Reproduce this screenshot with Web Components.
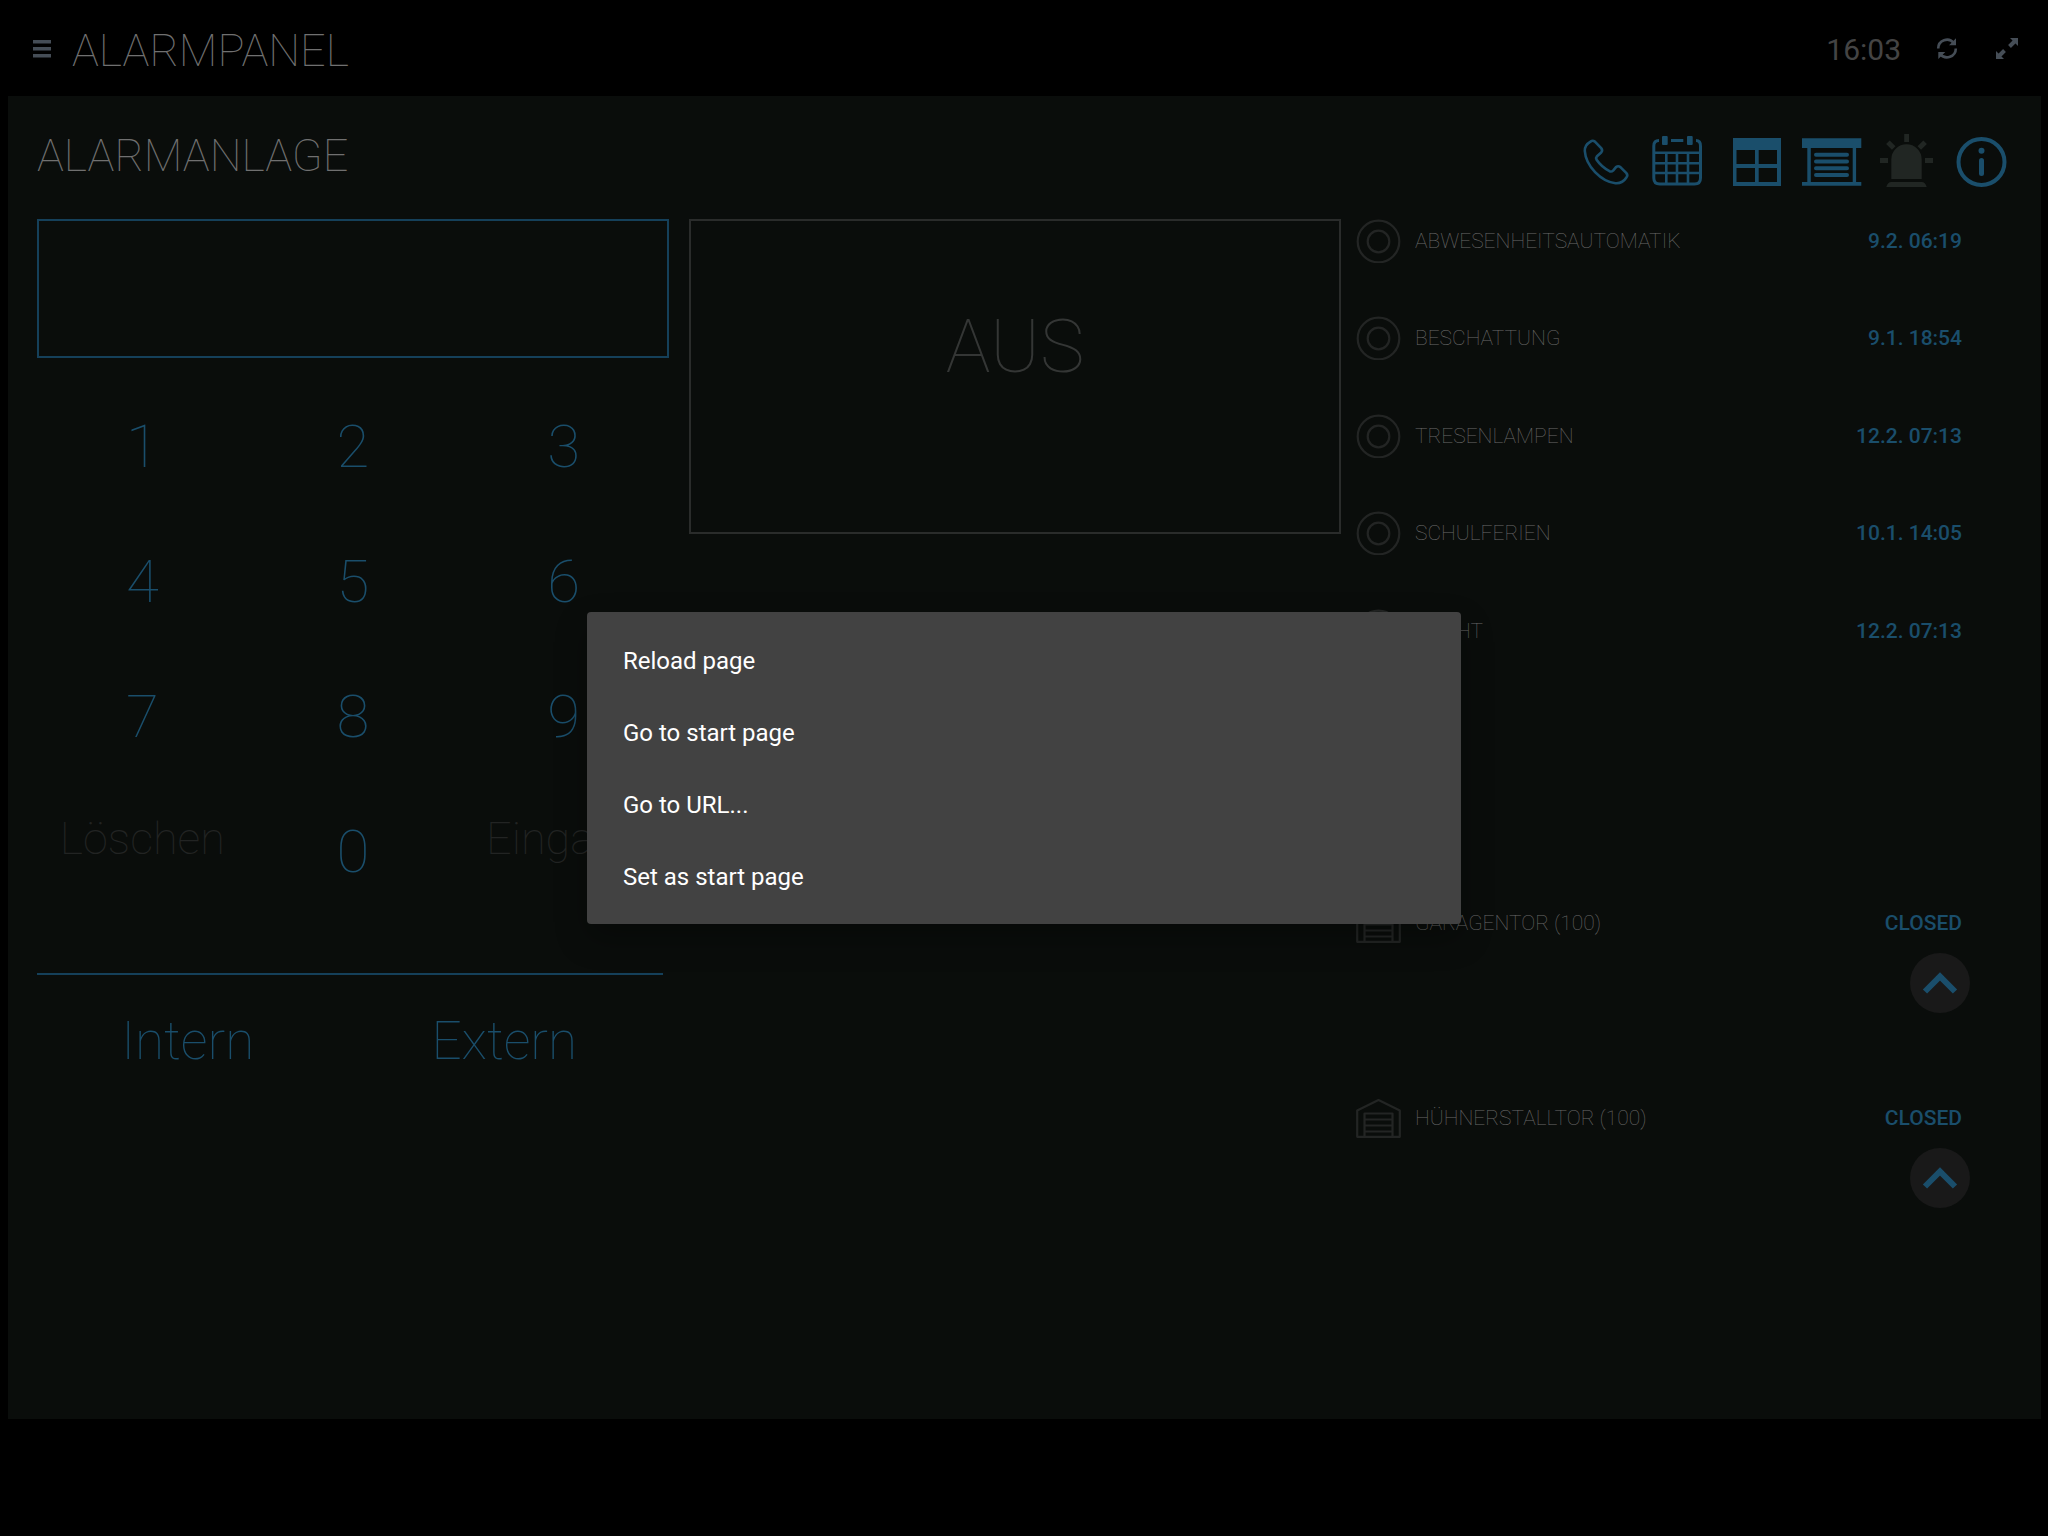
<!DOCTYPE html>
<html lang="de">
<head>
<meta charset="utf-8">
<title>Alarmpanel</title>
<style>
  html { background: #000; }
  body { margin: 0; background: #000; font-family: Roboto, "Liberation Sans", sans-serif; }
</style>
</head>
<body>
<alarm-app>
  <top-bar slot="header" heading="ALARMPANEL" time="16:03"></top-bar>
  <alarm-panel heading="ALARMANLAGE">
    <key-pad slot="keys"></key-pad>
    <alarm-state slot="state">AUS</alarm-state>
    <status-list slot="list">
      <status-row value="9.2. 06:19">ABWESENHEITSAUTOMATIK</status-row>
      <status-row value="9.1. 18:54">BESCHATTUNG</status-row>
      <status-row value="12.2. 07:13">TRESENLAMPEN</status-row>
      <status-row value="10.1. 14:05">SCHULFERIEN</status-row>
      <status-row value="12.2. 07:13">NACHT</status-row>
      <status-row gate class="garage" value="CLOSED">GARAGENTOR (100)</status-row>
      <status-row gate class="coop" value="CLOSED">HÜHNERSTALLTOR (100)</status-row>
    </status-list>
  </alarm-panel>
  <context-menu slot="overlay">
    <menu-item>Reload page</menu-item>
    <menu-item>Go to start page</menu-item>
    <menu-item>Go to URL...</menu-item>
    <menu-item>Set as start page</menu-item>
  </context-menu>
</alarm-app>

<script>
const RESET = `
  *, *::before, *::after { box-sizing: border-box; }
  button, input { font: inherit; color: inherit; margin: 0; padding: 0; border: 0; background: none; border-radius: 0; outline: 0; }
  button { cursor: pointer; }
  h1, h2 { margin: 0; font-weight: 100; }
  svg { display: block; }
`;
const define = (name, css, html) => customElements.define(name, class extends HTMLElement {
  constructor() {
    super();
    this.attachShadow({ mode: 'open' });
  }
  connectedCallback() {
    this.shadowRoot.innerHTML = `<style>${RESET}${css}</style>` + (typeof html === 'function' ? html(this) : html);
  }
});

define('alarm-app', `
  :host {
    --blue: #1a4e6b; --line: #15405a; --grey: #707070;
    box-sizing: border-box; display: flex; flex-direction: column; position: relative; min-height: 100vh; padding: 0 7px 117px 8px; background: #000;
  }
  ::slotted(top-bar) { margin: 0 -7px 0 -8px; }
  ::slotted(alarm-panel) { flex: 1; }
`, `<slot name="header"></slot><slot></slot><slot name="overlay"></slot>`);

define('top-bar', `
  :host { display: block; }
  header { display: flex; align-items: center; height: 96px; padding: 3px 30px 0 33px; color: #454d56; }
  h1 { flex: 1; padding: 2px 0 0 21px; font-size: 45px; color: var(--grey); }
  time { font-size: 30px; color: #444; }
  .refresh { margin: 0 38px 0 35px; }
`, el => `
  <header>
    <button aria-label="Menü"><svg width="18" height="20" viewBox="0 0 18 20" fill="currentColor"><path d="M0 0h18v3.500H0zM0 7h18v3.500H0zM0 14h18v3.500H0z"/></svg></button>
    <h1>${el.getAttribute('heading')}</h1>
    <time>${el.getAttribute('time')}</time>
    <button class="refresh" aria-label="Aktualisieren"><svg width="22" height="25" viewBox="0 0 22 25">
      <path d="M2.2 11.5a8.8 8.8 0 0 1 15.6-5.6M19.8 11.5a8.8 8.8 0 0 1-15.6 5.6" fill="none" stroke="currentColor" stroke-width="2.6"/>
      <path d="M20 1.3v7h-7zM2.3 22v-7h7z" fill="currentColor"/></svg></button>
    <button aria-label="Vollbild"><svg width="22" height="25" viewBox="0 0 22 25">
      <path d="M22 1v8L14 1zM0 22v-8l8 8z" fill="currentColor"/>
      <path d="M19 4l-5.5 5.5M3 19l5.5-5.5" stroke="currentColor" stroke-width="4"/></svg></button>
  </header>`);

const ICONS = {
  Telefon: `<path fill="none" stroke="currentColor" stroke-width="2.6" stroke-linejoin="round" d="M20.5 7.6q2.2-1.7 4.4 0l6.3 6.5q1.8 2.2 0 4.4l-4.2 3.7q-1.4 1.6-.4 3.6Q31.500 33 39.500 37.200q2 .9 3.600-.6l2.900-3.500q2.200-1.700 4.400 0l6 6q1.800 2.200 0 4.400-4 6.300-11 5.700C31 47.500 15.800 32 14.800 17q-.2-6 5.700-9.400z"/>`,
  Kalender: `<g fill="none" stroke="currentColor" stroke-width="3"><path d="M14 6.500q-5.200 0-5.200 5.500v32q0 6 6 6h34.700q6 0 6-6V12q0-5.500-4.500-5.500M26 6.500h12.300"/><path stroke-width="2.600" d="M8.800 18.700h46.700M8.800 29.300h46.700M8.800 39h46.700M21.300 18.700V50M32 18.700V50M43 18.700V50"/></g><path fill="currentColor" d="M18 2h3.700q1 0 1 1v7q0 1-1 1H18q-1 0-1-1V3q0-1 1-1zM43 2h3.700q1 0 1 1v7q0 1-1 1H43q-1 0-1-1V3q0-1 1-1z"/>`,
  Fenster: `<path fill="currentColor" fill-rule="evenodd" d="M13 4h48v48H13zM16.500 16v14H35V16zM38.700 16v14H57V16zM16.500 34v14H35V34zM38.700 34v14H57V34z"/>`,
  Rollladen: `<path fill="currentColor" d="M7 4.300h59.300V14H7zM12.300 14h3.500v34h-3.500zM57.700 14h3.400v34h-3.400zM7 48h59.300v3.700H7z"/><path stroke="currentColor" stroke-width="4" stroke-linecap="round" d="M21 20.700h31M21 27.500h31M21 34.300h31M21 41h31"/>`,
  Sirene: `<path fill="#212623" d="M21.300 45V25.500a15.200 15.200 0 0 1 30.400 0V45zM16.300 53q1.500-5 5-5h30.400q3.500 0 5 5zM34.200 0H39v8h-4.800zM10 24h8v5h-8zM55 24h8v5h-8z"/><path stroke="#212623" stroke-width="5" d="M17.900 8.200l5.800 5.800M55.100 8.200L49.300 14"/>`,
  Info: `<circle cx="36.500" cy="28" r="23" fill="none" stroke="currentColor" stroke-width="4"/><circle cx="36.500" cy="16.700" r="3" fill="currentColor"/><path d="M36.500 26.500v13" stroke="currentColor" stroke-width="5" stroke-linecap="round"/>`
};

define('alarm-panel', `
  :host { display: block; background: #0a0d0b; padding: 0 21px 32px 29px; }
  header { display: flex; justify-content: space-between; align-items: flex-start; height: 123px; }
  h2 { font-size: 45px; line-height: 119px; color: var(--grey); }
  nav { display: flex; padding-top: 38px; color: var(--blue); }
  main { display: grid; grid-template-columns: 632fr 687fr 664fr; align-items: start; }
`, el => `
  <header>
    <h2>${el.getAttribute('heading')}</h2>
    <nav>${Object.entries(ICONS).map(([name, art]) => `<button aria-label="${name}"><svg width="75" height="54" viewBox="0 0 75 54">${art}</svg></button>`).join('')}</nav>
  </header>
  <main><slot name="keys"></slot><slot name="state"></slot><slot name="list"></slot></main>`);

define('key-pad', `
  :host { display: block; color: var(--blue); font-weight: 100; }
  input { display: block; width: 100%; height: 139px; border: 2px solid var(--line); padding: 0 16px; font-size: 60px; }
  .keys { display: grid; grid-template-columns: repeat(3, 1fr); grid-auto-rows: 135px; margin-top: 21px; }
  .keys button { font-size: 60px; line-height: 135px; font-weight: 100; }
  .keys .word { font-size: 45px; line-height: 110px; align-self: start; color: #222423; }
  .modes { display: grid; grid-template-columns: 1fr 1fr; column-gap: 15px; margin: 54px 6px 0 0; padding-right: 8px; border-top: 2px solid var(--line); }
  .modes button { font-size: 53px; line-height: 132px; }
`, `
  <input type="password" aria-label="Code">
  <div class="keys">
    ${[1, 2, 3, 4, 5, 6, 7, 8, 9].map(n => `<button>${n}</button>`).join('')}
    <button class="word">Löschen</button><button>0</button><button class="word">Eingabe</button>
  </div>
  <div class="modes"><button>Intern</button><button>Extern</button></div>`);

define('alarm-state', `
  :host { display: block; padding: 0 15px 0 20px; }
  div { display: flex; align-items: center; justify-content: center; height: 315px; padding-bottom: 62px; border: 2px solid #2a2c2b; font-size: 75px; font-weight: 100; color: #343635; }
`, `<div><slot></slot></div>`);

define('status-list', `
  :host { display: grid; grid-template-rows: repeat(11, 1fr); min-height: 1072px; padding: 0 50px 0 0; }
  ::slotted(.garage) { grid-row: 8 / span 2; }
  ::slotted(.coop) { grid-row: 10 / span 2; }
`, `<slot></slot>`);

define('status-row', `
  :host { display: block; }
  .row { display: flex; align-items: center; height: 44px; padding-right: 8px; font-size: 21px; line-height: 44px; color: #232524; }
  .name { flex: 1; padding-left: 14px; font-weight: 100; color: #6a6a6a; }
  .value { font-weight: 500; color: var(--blue); }
  .up { display: flex; margin: 8px 0 0 auto; border-radius: 50%; background: #191919; color: var(--blue); }
`, el => {
  const gate = el.hasAttribute('gate');
  const art = gate
    ? `<path d="M1.200 14.500L22.500 4l21.300 10.500V40.800H1.200zM8.500 40.800V17.500h28v23.300M8.500 23.500h28M8.500 29.500h28M8.500 35.500h28"/>`
    : `<circle cx="22.500" cy="22.500" r="20.800"/><circle cx="22.500" cy="22.500" r="10.800"/>`;
  return `
  <div class="row">
    <button aria-label="Schalten"><svg width="45" height="44" viewBox="0 0 45 44" fill="none" stroke="currentColor" stroke-width="2.200" stroke-linejoin="round">${art}</svg></button>
    <span class="name"><slot></slot></span>
    <span class="value">${el.getAttribute('value')}</span>
  </div>
  ${gate ? `<button class="up" aria-label="Öffnen"><svg width="60" height="60" viewBox="0 0 60 60"><path d="M15 38.500l15-15 15 15" fill="none" stroke="currentColor" stroke-width="6"/></svg></button>` : ''}`;
});

define('context-menu', `
  :host { position: absolute; inset: 0; display: flex; align-items: center; justify-content: center; }
  div { width: 874px; max-width: 90%; padding: 13px 0 11px; border-radius: 4px; background: #424242; box-shadow: 0 14px 32px rgba(0, 0, 0, .3); }
`, `<div role="menu"><slot></slot></div>`);

define('menu-item', `
  :host { display: block; }
  button { display: block; width: 100%; padding: 0 36px; text-align: left; font-size: 24px; line-height: 72px; color: #fff; }
`, `<button role="menuitem"><slot></slot></button>`);
</script>
</body>
</html>
